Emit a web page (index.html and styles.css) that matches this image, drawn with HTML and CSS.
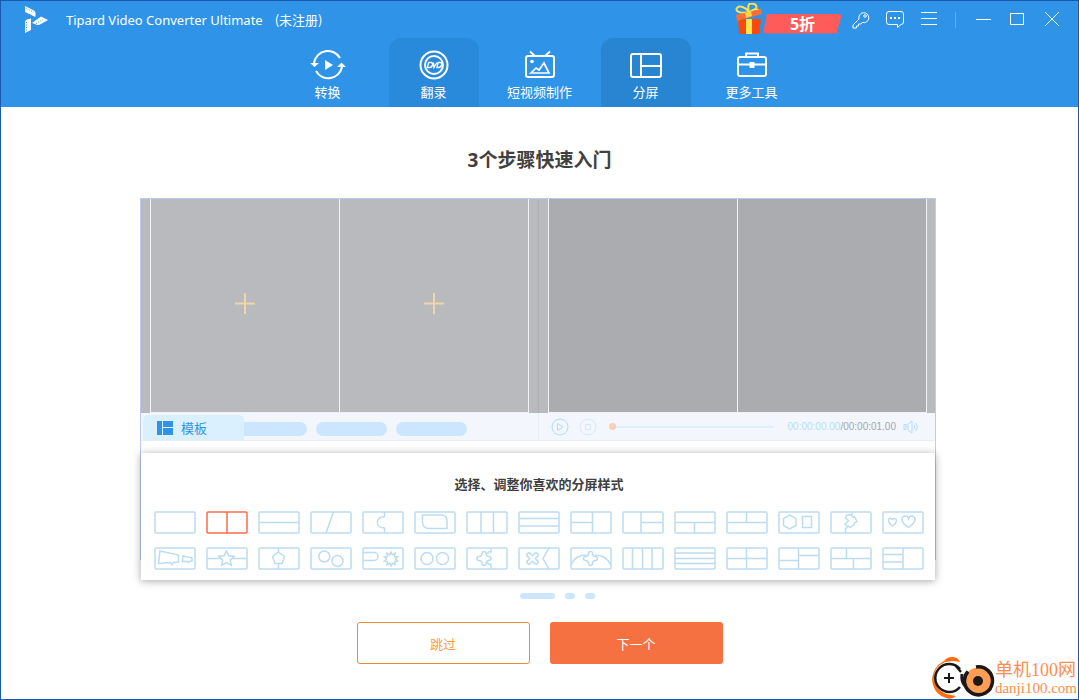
FILE: index.html
```html
<!DOCTYPE html>
<html lang="zh-CN">
<head>
<meta charset="utf-8">
<title>Tipard Video Converter Ultimate</title>
<link rel="stylesheet" href="styles.css">
</head>
<body>
<div class="window">
  <header class="header">
    <div class="titlebar">
      <svg class="logo" width="24" height="28" viewBox="0 0 24 28"><g fill="#fff"><path d="M1 0l9 4.500q1.500 1 1.500 3V11L1 6z"/><path d="M8 17l9-6.500 7 3.500-8 4.500q-2 1-4 0z"/><path d="M1 16q0-2 2-2.500l4-1V24l-6 3z"/></g><g fill="none" stroke="#2f93e8" stroke-dasharray="1 1.500"><path d="M2.500 2.500l7 3.500M12 17.500l7-4M2.500 16v9"/></g></svg>
      <span class="app-name">Tipard Video Converter Ultimate</span>
      <span class="app-state">(未注册)</span>
      <div class="tools">
        <a class="promo" href="#"><svg width="28" height="32" viewBox="0 0 28 32"><path d="M14 9C4 11 0 8 2 5s9-1 12 4C12 2 14-1 19 1s2 6-5 8c8-5 11-2 9 0" fill="none" stroke="#fee04a" stroke-width="2"/><path d="M3 16h23l-2 15H4z" fill="#f9490c"/><path d="M1 12l25-6 1 5-25 7z" fill="#ff6d39"/><path d="M11 16h6v15h-6z" fill="#ffe34f"/><path d="M10 10l6-2 1 5-6 2z" fill="#ffd43f"/></svg><span class="promo-tag">5折</span></a>
        <button class="tool" aria-label="注册"><svg width="18" height="18" viewBox="0 0 18 18"><path d="M7 8a5 5 0 1 1 3.500 3.500L8.500 13H6.500v2h-2v2H1v-3z"/><circle cx="13" cy="5" r="1.300"/></svg></button>
        <button class="tool" aria-label="反馈"><svg width="18" height="18" viewBox="0 0 18 18"><path d="M3 .5h12A2.500 2.500 0 0 1 17.500 3v8a2.500 2.500 0 0 1-2.500 2.500L11.500 16.500v-3H3A2.500 2.500 0 0 1 .5 11V3A2.500 2.500 0 0 1 3 .5z"/><path d="M4 7h2M8 7h2M12 7h2" stroke-width="2"/></svg></button>
        <button class="tool" aria-label="菜单"><svg width="16" height="18" viewBox="0 0 16 18"><path d="M0 1.500h16M0 7.500h16M0 13.500h16"/></svg></button>
        <span class="separator"></span>
        <button class="tool" aria-label="最小化"><svg width="16" height="18" viewBox="0 0 16 18"><path d="M0 8.500h15"/></svg></button>
        <button class="tool" aria-label="最大化"><svg width="16" height="18" viewBox="0 0 16 18"><path d="M.5 2.500h13v11H.5z"/></svg></button>
        <button class="tool" aria-label="关闭"><svg width="16" height="18" viewBox="0 0 16 18"><path d="M1 1l14 14M15 1L1 15"/></svg></button>
      </div>
    </div>
    <nav class="tabs">
      <button class="tab"><svg width="36" height="30" viewBox="0 0 36 30"><path d="M4 13A14 14 0 0 1 30 8M6 21a14 14 0 0 0 26-4"/><path d="M0 13h9l-4.500 4zM27 17h9l-4.500-4.500zM15 10v10l8-5z" class="solid"/></svg><span>转换</span></button>
      <button class="tab tab-hover"><svg width="30" height="30" viewBox="0 0 30 30"><circle cx="15" cy="15" r="13.500"/><circle cx="15" cy="15" r="9"/><path d="M9.500 12.500H12q2 0 1.500 2.500T10.500 17.500h-2l1-5M14.500 12.500l.5 5 3-5M19 12.500h2q2 0 1.500 2.500T19.500 17.500h-1.500l1-5" stroke-width="1.300"/></svg><span>翻录</span></button>
      <button class="tab"><svg width="32" height="30" viewBox="0 0 32 30"><rect x="2" y="6" width="28" height="21" rx="2"/><path d="M6 1.500l5 4.500M26 1.500L21 6M7 23l5-5 3 2 5-7 5 10z" stroke-width="1.700"/><circle cx="8" cy="11.500" r="1.800" class="solid"/></svg><span>短视频制作</span></button>
      <button class="tab tab-active"><svg width="32" height="30" viewBox="0 0 32 30"><rect x="1" y="4" width="30" height="23" rx="2"/><path d="M11 4v23M11 16h20"/></svg><span>分屏</span></button>
      <button class="tab"><svg width="32" height="30" viewBox="0 0 32 30"><rect x="2" y="7" width="28" height="19" rx="2"/><path d="M10 7V3.500h12V7M2 14.500h28"/><path d="M13.500 12h5v6h-5z" class="solid"/></svg><span>更多工具</span></button>
    </nav>
  </header>

  <main class="main">
    <h1 class="heading">3个步骤快速入门</h1>
    <div class="stage">
      <section class="editor">
        <div class="preview">
          <div class="pane">
            <div class="cell"><svg width="20" height="21" viewBox="0 0 20 21"><path d="M10 0v21M0 10.500h20"/></svg></div>
            <div class="cell"><svg width="20" height="21" viewBox="0 0 20 21"><path d="M10 0v21M0 10.500h20"/></svg></div>
          </div>
          <div class="pane pane-output"><div class="cell"></div><div class="cell"></div></div>
        </div>
        <div class="toolbar">
          <div class="toolbar-tabs">
            <button class="template-tab"><svg width="16" height="14" viewBox="0 0 16 14"><path d="M0 0h5v14H0zM6 0h10v6H6zM6 7h10v7H6z"/></svg>模板</button>
            <span class="pill pill-first"></span><span class="pill"></span><span class="pill"></span>
          </div>
          <div class="player">
            <button class="round" aria-label="播放"><svg width="18" height="18" viewBox="0 0 18 18"><circle cx="9" cy="9" r="8"/><path d="M6.500 5.500v7l5.500-3.500z"/></svg></button>
            <button class="round faint" aria-label="停止"><svg width="18" height="18" viewBox="0 0 18 18"><circle cx="9" cy="9" r="8"/><path d="M6.500 6.500h5v5h-5z"/></svg></button>
            <input class="seek" type="range" min="0" max="100" value="0" aria-label="进度">
            <span class="time"><span class="elapsed">00:00:00.00</span>/00:00:01.00</span>
            <button class="round" aria-label="音量"><svg width="16" height="14" viewBox="0 0 16 14"><path d="M1 4.500h2v5H1zM5 4l4-3v12l-4-3zM11 5q1.500 2 0 4M12.500 3q3.500 4 0 8"/></svg></button>
          </div>
        </div>
        <div class="panel">
          <h2 class="panel-title">选择、调整你喜欢的分屏样式</h2>
          <div class="templates">
            <button class="tpl" aria-label="样式 1"><svg viewBox="0 0 42 23"><rect x="1" y="1" width="40" height="21" rx="1"/></svg></button>
            <button class="tpl selected" aria-label="样式 2"><svg viewBox="0 0 42 23"><rect x="1" y="1" width="40" height="21" rx="1"/><path d="M21 1v21"/></svg></button>
            <button class="tpl" aria-label="样式 3"><svg viewBox="0 0 42 23"><rect x="1" y="1" width="40" height="21" rx="1"/><path d="M1 11.500h40"/></svg></button>
            <button class="tpl" aria-label="样式 4"><svg viewBox="0 0 42 23"><rect x="1" y="1" width="40" height="21" rx="1"/><path d="M23.500 1L16 22"/></svg></button>
            <button class="tpl" aria-label="样式 5"><svg viewBox="0 0 42 23"><rect x="1" y="1" width="40" height="21" rx="1"/><path d="M22.500 1v4.500Q17 6 16 9q-1.500 2.500 0 5 1 2.500 6.500 3v5"/></svg></button>
            <button class="tpl" aria-label="样式 6"><svg viewBox="0 0 42 23"><rect x="1" y="1" width="40" height="21" rx="1"/><path d="M8.500 4H27q6 0 6 6v7.500H15q-6.500 0-6.500-6.500z"/></svg></button>
            <button class="tpl" aria-label="样式 7"><svg viewBox="0 0 42 23"><rect x="1" y="1" width="40" height="21" rx="1"/><path d="M15 1v21M27.500 1v21"/></svg></button>
            <button class="tpl" aria-label="样式 8"><svg viewBox="0 0 42 23"><rect x="1" y="1" width="40" height="21" rx="1"/><path d="M1 7.500h40M1 15h40"/></svg></button>
            <button class="tpl" aria-label="样式 9"><svg viewBox="0 0 42 23"><rect x="1" y="1" width="40" height="21" rx="1"/><path d="M22.500 1v21M1 11.500h21"/></svg></button>
            <button class="tpl" aria-label="样式 10"><svg viewBox="0 0 42 23"><rect x="1" y="1" width="40" height="21" rx="1"/><path d="M19 1v21M19 11.500h22"/></svg></button>
            <button class="tpl" aria-label="样式 11"><svg viewBox="0 0 42 23"><rect x="1" y="1" width="40" height="21" rx="1"/><path d="M1 11.500h40M20.500 11.500V22"/></svg></button>
            <button class="tpl" aria-label="样式 12"><svg viewBox="0 0 42 23"><rect x="1" y="1" width="40" height="21" rx="1"/><path d="M1 11.500h40M20.500 1v10.500"/></svg></button>
            <button class="tpl" aria-label="样式 13"><svg viewBox="0 0 42 23"><rect x="1" y="1" width="40" height="21" rx="1"/><path d="M11.700 4.200L18 7.500v7l-6.300 3.300-6.200-3.300v-7zM24.500 5.500h9v11h-9z"/></svg></button>
            <button class="tpl" aria-label="样式 14"><svg viewBox="0 0 42 23"><rect x="1" y="1" width="40" height="21" rx="1"/><path d="M23 1l-1.500 3M20.500 3.500l3 3 1-1 2.500 5-2 1-1 2-4 3-2-1.500-2.500 3V22M20.500 3.500l-4 1-1 3 3 2-3.500 3.500 1.500 2"/></svg></button>
            <button class="tpl" aria-label="样式 15"><svg viewBox="0 0 42 23"><rect x="1" y="1" width="40" height="21" rx="1"/><path d="M10.500 15Q6.500 12 6.500 9.500c0-2.500 3.500-2.500 4-.5.5-2 4-2 4 .5q0 2.500-4 5.500zM26.500 16.500Q20 12 20 8.500c0-4.500 5.500-4.500 6.500-1 1-3.500 6.500-3.500 6.500 1q0 3.500-6.500 8z"/></svg></button>

            <button class="tpl" aria-label="样式 16"><svg viewBox="0 0 42 23"><rect x="1" y="1" width="40" height="21" rx="1"/><path d="M6 4l18.500 4v7l-5 .5-1.500 2-1.500-2L4.500 16.500zM29 9l9 2v3l-3 .5-.5 1-1-1-5 0z"/></svg></button>
            <button class="tpl" aria-label="样式 17"><svg viewBox="0 0 42 23"><rect x="1" y="1" width="40" height="21" rx="1"/><path d="M1 11.500h14M26 11.500h15M20.500 4l2.400 4.700 5.300.7-3.900 3.700 1 5.200-4.800-2.600-4.800 2.600 1-5.200-3.900-3.700 5.300-.7z"/></svg></button>
            <button class="tpl" aria-label="样式 18"><svg viewBox="0 0 42 23"><rect x="1" y="1" width="40" height="21" rx="1"/><path d="M20.500 1v4M20.500 17v5M20.500 5l6 4.500-2.500 7h-7l-2.500-7z"/></svg></button>
            <button class="tpl" aria-label="样式 19"><svg viewBox="0 0 42 23"><rect x="1" y="1" width="40" height="21" rx="1"/><circle cx="14.300" cy="9.500" r="5.500"/><circle cx="27.500" cy="14" r="5.500"/></svg></button>
            <button class="tpl" aria-label="样式 20"><svg viewBox="0 0 42 23"><rect x="1" y="1" width="40" height="21" rx="1"/><path d="M1 5.500h11a4 4 0 0 1 0 8H1M29 5l1.300 2.900 2.800-1.600-.6 3.200 3.200.3-2.400 2.200 2.400 2.200-3.200.3.600 3.200-2.800-1.600L29 19l-1.300-2.900-2.800 1.600.6-3.200-3.200-.3 2.400-2.200-2.400-2.200 3.200-.3-.6-3.200 2.800 1.600z"/></svg></button>
            <button class="tpl" aria-label="样式 21"><svg viewBox="0 0 42 23"><rect x="1" y="1" width="40" height="21" rx="1"/><circle cx="13" cy="11.500" r="6"/><circle cx="28.500" cy="11.500" r="6"/></svg></button>
            <button class="tpl" aria-label="样式 22"><svg viewBox="0 0 42 23"><rect x="1" y="1" width="40" height="21" rx="1"/><path d="M25 1v4q-3-1-3.500 2M25 22v-5q-3 1-3.500-2"/><path transform="translate(18 11.500)" d="M-2-5a2 2 0 0 1 4 0Q2-2 5-2a2 2 0 0 1 0 4Q2 2 2 5a2 2 0 0 1-4 0Q-2 2-5 2a2 2 0 0 1 0-4Q-2-2-2-5z"/></svg></button>
            <button class="tpl" aria-label="样式 23"><svg viewBox="0 0 42 23"><rect x="1" y="1" width="40" height="21" rx="1"/><path d="M31 1l-6 10.500L31 22"/><path transform="translate(14.500 11.500) rotate(45)" d="M-2-5a2 2 0 0 1 4 0V-2H5a2 2 0 0 1 0 4H2V5a2 2 0 0 1-4 0V2H-5a2 2 0 0 1 0-4H-2z"/></svg></button>
            <button class="tpl" aria-label="样式 24"><svg viewBox="0 0 42 23"><rect x="1" y="1" width="40" height="21" rx="1"/><path d="M1 18Q5 8 16 8M25 8q11 0 16 10"/><path transform="translate(20.500 11.500)" d="M-2-5a2 2 0 0 1 4 0Q2-2 5-2a2 2 0 0 1 0 4Q2 2 2 5a2 2 0 0 1-4 0Q-2 2-5 2a2 2 0 0 1 0-4Q-2-2-2-5z"/></svg></button>
            <button class="tpl" aria-label="样式 25"><svg viewBox="0 0 42 23"><rect x="1" y="1" width="40" height="21" rx="1"/><path d="M10.500 1v21M20.500 1v21M30 1v21"/></svg></button>
            <button class="tpl" aria-label="样式 26"><svg viewBox="0 0 42 23"><rect x="1" y="1" width="40" height="21" rx="1"/><path d="M1 6h40M1 11.500h40M1 16.500h40"/></svg></button>
            <button class="tpl" aria-label="样式 27"><svg viewBox="0 0 42 23"><rect x="1" y="1" width="40" height="21" rx="1"/><path d="M20.500 1v21M1 11.500h40"/></svg></button>
            <button class="tpl" aria-label="样式 28"><svg viewBox="0 0 42 23"><rect x="1" y="1" width="40" height="21" rx="1"/><path d="M20.500 1v21M1 13.500h19.500M20.500 8.500H41"/></svg></button>
            <button class="tpl" aria-label="样式 29"><svg viewBox="0 0 42 23"><rect x="1" y="1" width="40" height="21" rx="1"/><path d="M1 11.500h40M16.500 1v10.500M23.500 11.500V22"/></svg></button>
            <button class="tpl" aria-label="样式 30"><svg viewBox="0 0 42 23"><rect x="1" y="1" width="40" height="21" rx="1"/><path d="M21 1v21M1 7.500h20M1 15h20"/></svg></button>
          </div>
        </div>
      </section>
    </div>
    <div class="steps"><span class="step current"></span><span class="step"></span><span class="step"></span></div>
    <div class="actions">
      <button class="btn skip">跳过</button>
      <button class="btn next">下一个</button>
    </div>
  </main>

  <aside class="watermark">
    <svg width="64" height="42" viewBox="0 0 64 42"><path d="M13 4Q16 0 21 0q6 0 8 5l-6-1-9 1Q3 10 3 20q1 13 12 17l10 2q-4 4-10 2Q5 38 2 28T7 8z" fill="#ff6c0a"/><circle cx="18" cy="21" r="13" fill="#fff"/><path d="M29 12A14 14 0 1 0 29 30M24 8l6 7" fill="none" stroke="#1d1718" stroke-width="2.500"/><path d="M13 21h10M18 16v10" stroke="#1d1718" stroke-width="2"/><circle cx="47" cy="24" r="13.500" fill="#ff9d55"/><path d="M37 14.500A14 14 0 1 0 45 10" fill="none" stroke="#1d1718" stroke-width="3.500"/><path d="M31 17q-1 8 3 12" fill="none" stroke="#1d1718" stroke-width="3"/><circle cx="47" cy="24" r="5" fill="#1d1718"/></svg>
    <div class="watermark-text"><span class="watermark-name">单机100网</span><span class="watermark-site">danji100.com</span></div>
  </aside>
</div>
</body>
</html>
```
FILE: styles.css
```css
* { box-sizing: border-box; }
body {
  margin: 0;
  font-family: "Noto Sans", "Noto Sans CJK SC", sans-serif;
  font-size: 13px;
  color: #404040;
}
button {
  margin: 0;
  padding: 0;
  border: 0;
  background: none;
  font: inherit;
  color: inherit;
  cursor: pointer;
}
svg { display: block; }
.window {
  position: relative;
  min-height: 100vh;
  border: 1px solid #1c5ab2;
  background: #fff;
}

.header { background: #2f94e8; color: #fff; }
.titlebar {
  display: flex;
  align-items: center;
  height: 37px;
  padding: 0 9px 0 23px;
}
.logo { margin-right: 18px; }
.app-name { font-size: 13px; margin-right: 12px; white-space: nowrap; }
.app-state { font-size: 13px; font-family: "Noto Sans CJK SC", sans-serif; white-space: nowrap; }
.tools { display: flex; align-items: center; margin-left: auto; }
.promo {
  display: flex;
  align-items: flex-end;
  margin-right: 2px;
  padding-bottom: 2px;
  color: #fff;
  text-decoration: none;
}
.promo-tag {
  width: 79px;
  height: 20px;
  margin-bottom: 1px;
  background: #ff5b5b;
  border-radius: 4px;
  clip-path: polygon(5% 0, 100% 0, 93% 100%, 0 100%);
  font-size: 16px;
  font-weight: 700;
  line-height: 20px;
  text-align: center;
}
.tool { display: flex; justify-content: center; width: 34px; height: 24px; align-items: center; }
.tool svg { fill: none; stroke: #fff; stroke-width: 1; }
.separator { width: 1px; height: 16px; margin: 0 11px 0 9px; background: #60b0f2; }

.tabs { display: flex; justify-content: center; gap: 16px; }
.tab {
  display: flex;
  flex-direction: column;
  align-items: center;
  gap: 2px;
  width: 90px;
  height: 69px;
  padding-top: 12px;
  border-radius: 12px 12px 0 0;
  line-height: 20px;
  white-space: nowrap;
}
.tab svg { fill: none; stroke: #fff; stroke-width: 2; }
.tab .solid { fill: #fff; stroke: none; }
.tab-hover { background: #298adb; }
.tab-active { background: #2785d2; }

.heading {
  margin: 41px 0 26px;
  font-size: 19px;
  font-weight: 700;
  line-height: 24px;
  text-align: center;
}
.stage { padding-right: 3px; }
.editor {
  display: flow-root;
  width: 74%;
  min-width: 796px;
  margin: 0 auto;
  border: 1px solid #b8cbf1;
  border-bottom: 0;
}
.preview { display: flex; height: 214px; background: #b9babe; }
.pane {
  display: flex;
  flex: 0 0 50%;
  padding: 0 9px;
}
.pane-output { padding-right: 8px; border-left: 1px solid #b1b2b6; }
.cell {
  display: flex;
  flex: 1;
  align-items: center;
  justify-content: center;
  border: solid #f2f2f4;
  border-width: 0 0 1px 1px;
}
.cell:last-child { border-right-width: 1px; }
.pane-output .cell { background: #abacb0; }
.cell svg { stroke: #f0d5a8; stroke-width: 2; margin-top: -5px; }

.toolbar {
  display: flex;
  height: 28px;
  background: #f3f7fd;
  border-bottom: 1px solid #e6ebf8;
}
.toolbar-tabs { display: flex; flex: 0 0 50%; align-items: center; gap: 9px; padding-left: 2px; }
.template-tab {
  display: flex;
  align-items: center;
  align-self: flex-end;
  gap: 8px;
  width: 101px;
  height: 25px;
  padding-left: 14px;
  border-radius: 5px 5px 0 0;
  background: #daf0ff;
  color: #2f94e8;
}
.template-tab svg { fill: #2f94e8; }
.pill { width: 71px; height: 14px; margin-top: 4px; border-radius: 7px; background: #cce6ff; }
.pill-first { width: 63px; margin-left: -9px; border-radius: 0 7px 7px 0; }
.player {
  display: flex;
  flex: 0 0 50%;
  align-items: center;
  padding: 0 16px 0 12px;
  border-left: 1px solid #e9eefa;
}
.round svg { fill: none; stroke: #b1dbf8; stroke-width: 1; }
.round + .faint { margin: 0 12px 0 10px; }
.faint svg { stroke: #d5eafa; }
.seek {
  flex: 1;
  min-width: 0;
  height: 14px;
  margin: 0 14px 0 0;
  appearance: none;
  background: linear-gradient(#deeefb, #deeefb) center / 100% 2px no-repeat;
}
.seek::-webkit-slider-thumb {
  appearance: none;
  width: 7px;
  height: 7px;
  border-radius: 50%;
  background: #f9cfb7;
}
.time { margin-right: 7px; font-family: "Liberation Sans", sans-serif; font-size: 10px; color: #a3a6ab; white-space: nowrap; }
.elapsed { color: #b7dcf6; }

.panel {
  position: relative;
  margin: 12px 0 -20px;
  padding: 21px 11px 10px 13px;
  background: #fff;
  box-shadow: 0 1px 8px rgba(0, 0, 0, .35);
}
.panel-title { margin: 0 0 17px; font-size: 13px; font-weight: 700; line-height: 20px; text-align: center; }
.templates {
  display: grid;
  grid-template-columns: repeat(15, 42px);
  justify-content: space-between;
  row-gap: 13px;
}
.tpl svg { width: 42px; height: 23px; fill: none; stroke: #bcdcf1; stroke-width: 1.5; }
.tpl.selected svg { stroke: #fb6b4b; }

.steps { display: flex; justify-content: center; gap: 10px; margin-top: 33px; padding-left: 36px; }
.step { width: 10px; height: 6px; border-radius: 3px; background: #cce6ff; }
.step.current { width: 35px; }
.actions { display: flex; justify-content: center; gap: 20px; margin-top: 23px; }
.btn { width: 173px; height: 42px; border-radius: 3px; }
.skip { border: 1px solid #ee8a35; color: #fba04c; }
.next { background: #f57141; color: #fff; }

.watermark { position: absolute; right: 1px; bottom: 0; display: flex; align-items: center; }
.watermark-text {
  display: flex;
  flex-direction: column;
  font-family: "Liberation Serif", "Noto Sans CJK SC", serif;
  color: #ff8d4d;
}
.watermark-name { font-size: 18px; line-height: 20px; white-space: nowrap; }
.watermark-site { font-size: 15px; line-height: 17px; }
```
